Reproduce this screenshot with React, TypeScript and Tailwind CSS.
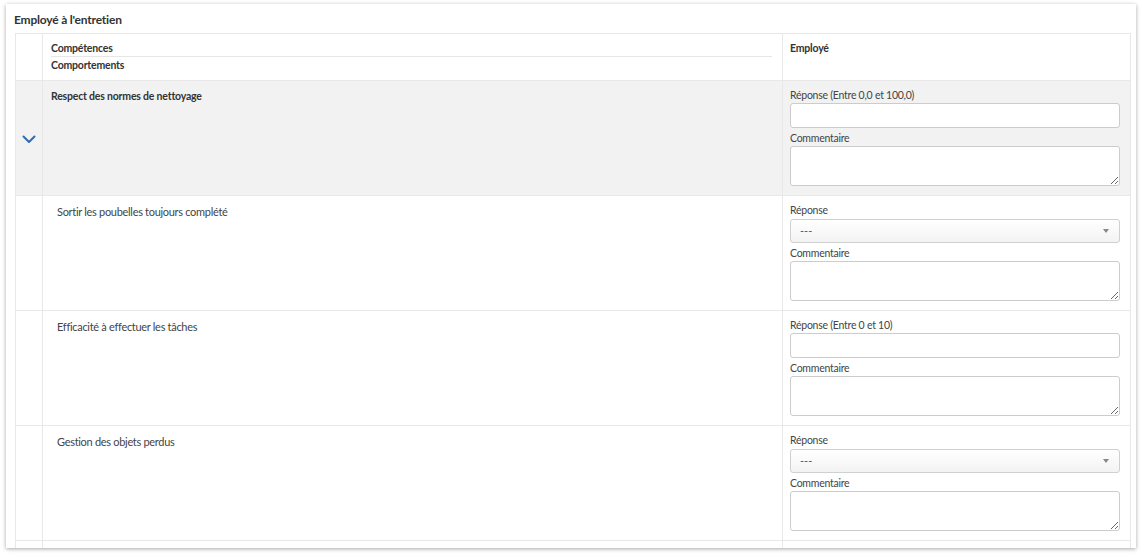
interface Behaviour {
  id: number;
  label: string;
  kind: 'number' | 'select';
  hint?: string;
}

const behaviours: Behaviour[] = [
  { id: 1, label: 'Sortir les poubelles toujours complété', kind: 'select' },
  { id: 2, label: 'Efficacité à effectuer les tâches', kind: 'number', hint: 'Entre 0 et 10' },
  { id: 3, label: 'Gestion des objets perdus', kind: 'select' },
];

function Chevron() {
  return (
    <svg width="14" height="9" viewBox="0 0 14 9" fill="none">
      <path d="M1.5 1.5 L7 7 L12.5 1.5" stroke="#2c6cb4" strokeWidth="2" strokeLinecap="round" strokeLinejoin="round" />
    </svg>
  );
}

function AnswerFields({ kind, hint }: { kind: 'number' | 'select'; hint?: string }) {
  return (
    <div className="flex flex-col">
      <label className="text-[10.5px] leading-[15px] tracking-[-0.25px] text-[#444]">
        Réponse{hint && ` (${hint})`}
      </label>
      {kind === 'number' ? (
        <input className="h-[25px] w-full rounded-[3px] border border-[#ccc] bg-white px-2 text-[12px] outline-none" />
      ) : (
        <div className="mt-px flex h-[24px] w-full items-center justify-between rounded-[3px] border border-[#d0d0d0] bg-gradient-to-b from-white to-[#f3f3f3] pl-[9px] pr-[10px]">
          <span className="text-[11px] text-[#555]">---</span>
          <span className="h-0 w-0 border-x-[3.5px] border-t-[4px] border-x-transparent border-t-[#888]" />
        </div>
      )}
      <label className="mt-[2px] text-[10.5px] leading-[16px] tracking-[-0.25px] text-[#444]">Commentaire</label>
      <textarea className="block h-[40px] w-full rounded-[3px] border border-[#ccc] bg-white outline-none" />
    </div>
  );
}

export default function App() {
  return (
    <div className="min-h-screen bg-white pl-[6px] pt-[4px] font-['Lato',sans-serif] text-[#333]">
      <div className="h-[544px] w-[1130px] overflow-hidden bg-white shadow-[0_1px_4px_rgba(0,0,0,0.35)]">
        <h2 className="pl-[8px] pt-[7px] text-[12px] font-bold leading-[18px] tracking-[-0.2px] text-[#333]">Employé à l'entretien</h2>
        <table className="ml-[9px] mt-[4px] w-[1115px] table-fixed border-collapse border border-[#e8e8e8]">
          <colgroup>
            <col className="w-[27px]" />
            <col className="w-[740px]" />
            <col className="w-[348px]" />
          </colgroup>
          <thead>
            <tr className="h-[47px] align-top">
              <th className="border-r border-[#e8e8e8]" />
              <th className="border-r border-[#e8e8e8] pl-[8px] pr-[10px] pt-[7px] text-left text-[10.5px] font-bold leading-[14px] tracking-[-0.2px]">
                <div className="border-b border-[#e6e6e6] pb-px">Compétences</div>
                <div className="pt-px">Comportements</div>
              </th>
              <th className="pl-[7px] pt-[7px] text-left text-[10.5px] font-bold leading-[14px] tracking-[-0.2px]">Employé</th>
            </tr>
          </thead>
          <tbody>
            <tr className="h-[115px] border-t border-[#e8e8e8] bg-[#f2f2f2] align-top">
              <td className="border-r border-[#e8e8e8] pr-[1px] align-middle">
                <div className="flex justify-center pt-[2px]">
                  <Chevron />
                </div>
              </td>
              <td className="border-r border-[#e8e8e8] pl-[8px] pt-[8px] text-[10.5px] font-bold leading-[15px] tracking-[-0.2px]">
                Respect des normes de nettoyage
              </td>
              <td className="pl-[7px] pr-[10px] pt-[7px]">
                <AnswerFields kind="number" hint="Entre 0,0 et 100,0" />
              </td>
            </tr>
            {behaviours.map((b) => (
              <tr key={b.id} className="h-[115px] border-t border-[#e8e8e8] align-top">
                <td className="border-r border-[#e8e8e8]" />
                <td className="border-r border-[#e8e8e8] pl-[14px] pt-[8px] text-[11px] leading-[15px] tracking-[-0.3px] text-[#444]">
                  {b.label}
                </td>
                <td className="pl-[7px] pr-[10px] pt-[7px]">
                  <AnswerFields kind={b.kind} hint={b.hint} />
                </td>
              </tr>
            ))}
            <tr className="h-[40px] border-t border-[#e8e8e8]">
              <td className="border-r border-[#e8e8e8]" />
              <td className="border-r border-[#e8e8e8]" />
              <td />
            </tr>
          </tbody>
        </table>
      </div>
    </div>
  );
}
